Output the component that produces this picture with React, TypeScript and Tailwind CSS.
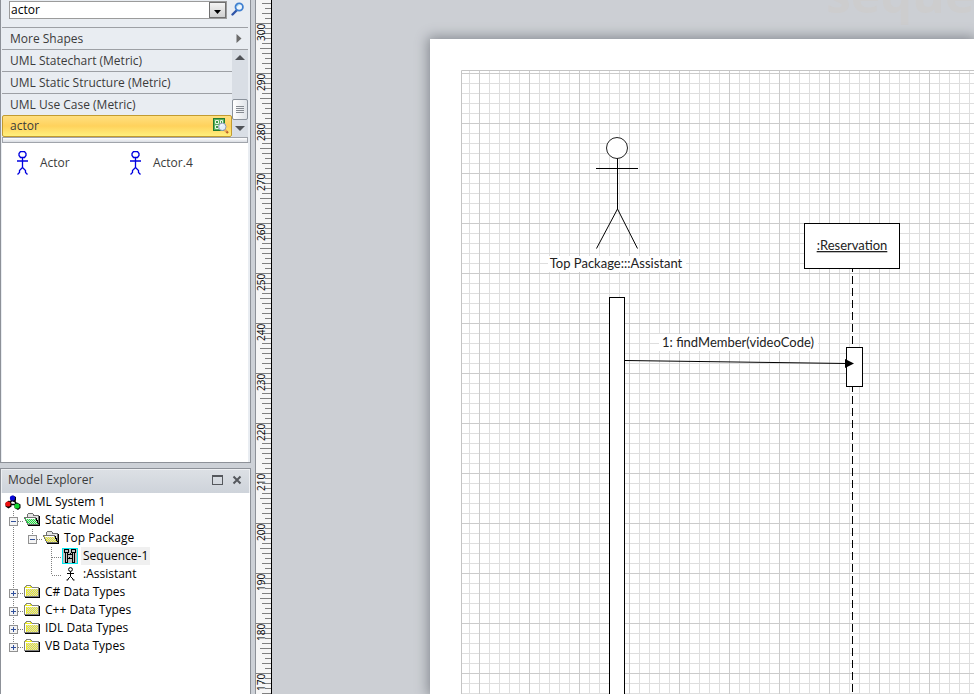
import { useState } from "react";
import type { ReactNode } from "react";
import clsx from "clsx";

const stencils = [
  "UML Statechart (Metric)",
  "UML Static Structure (Metric)",
  "UML Use Case (Metric)",
];

const rulerLabels = [300, 290, 280, 270, 260, 250, 240, 230, 220, 210, 200, 190, 180, 170];

// left end of each tick, counted from a numbered division
const tickStarts = [1, 10, 7, 10, 7, 5, 7, 10, 7, 10];

type Guide = "line" | "none" | "branch" | "last" | "open" | "closed" | "closedLast" | "openLast";

type TreeRow = {
  label: string;
  guides: Guide[];
  icon: ReactNode;
  selected?: boolean;
};

function SearchIcon() {
  return (
    <svg width="14" height="14" viewBox="0 0 14 14" aria-hidden="true">
      <path d="M1.5 12.5 5.5 8.5" stroke="#2f55a8" strokeWidth="2.4" strokeLinecap="round" />
      <circle cx="8.2" cy="5" r="3.7" fill="#eef6fd" stroke="#3f7fd0" strokeWidth="1.8" />
      <path d="M6 4.6a2.4 2.4 0 0 1 2.4-2" stroke="#8fd0f0" fill="none" />
    </svg>
  );
}

function StencilSearchIcon() {
  return (
    <svg width="16" height="16" viewBox="0 0 16 16" aria-hidden="true">
      <rect x="0.5" y="0.5" width="11" height="12" fill="#58b060" stroke="#237a30" />
      <path d="M2.500 2.500h3v3h-3zM7.500 2.500h2v3h-2zM2.500 7.500h3v3h-3z" fill="#3f9a48" stroke="#e9f7e6" />
      <path d="m11.500 11.500 3.500 3.500" stroke="#b8622a" strokeWidth="2.200" />
      <path d="m11 11 2.500 2.500" stroke="#f3b25a" strokeWidth="2" />
      <circle cx="9.300" cy="8.800" r="3.700" fill="#e4eef8" stroke="#8c9cb8" />
      <path d="M7.500 8.400a2 2 0 0 1 2-1.600" stroke="#fff" fill="none" />
    </svg>
  );
}

function ActorIcon() {
  return (
    <svg width="12" height="24" viewBox="0 0 12 24" fill="none" stroke="#0000e0" aria-hidden="true">
      <path d="M3.5.5h4l1.5 2v2l-1.5 2h-4L2 4.500v-2z" strokeWidth="1.3" />
      <path d="M0 10h11" strokeWidth="1.5" />
      <path d="M5.500 7v10M5.500 16.500 2.500 19.500v2L.5 23.500M5.500 16.500l3 3v2l2 2" strokeWidth="1.3" />
    </svg>
  );
}

function ModelIcon() {
  return (
    <svg width="16" height="15" viewBox="0 0 16 15" aria-hidden="true">
      <path d="M7 5 4 9M9 5l3 5M5 9.500h6" stroke="#000" strokeWidth="1.500" />
      <path d="M5.500 2 8 .5l3 1.500v3.500L8.500 7l-3-1.500z" fill="#000" />
      <circle cx="7.500" cy="3" r="2.600" fill="#0808d8" />
      <path d="M.5 8 4 5.500 6.500 8v3.500L3.500 13.500l-3-2z" fill="#000" />
      <circle cx="3" cy="9" r="2.600" fill="#f01010" />
      <path d="M9.500 9 12 7.500l3.500 2v3.500L13 15l-3.500-2z" fill="#000" />
      <circle cx="12" cy="11" r="2.600" fill="#10d830" />
    </svg>
  );
}

// checkered rows of single pixels over a folder face
function Dither({ x, y, width, rows }: { x: number; y: number; width: number; rows: number }) {
  return (
    <g stroke="#d4d4d4" strokeDasharray="1 1">
      {Array.from({ length: rows }, (_, i) => (
        <path key={i} d={`M${x + (i % 2)} ${y + i + 0.5}H${x + width}`} />
      ))}
    </g>
  );
}

function ClosedFolder() {
  return (
    <svg width="16" height="14" viewBox="0 0 16 14" shapeRendering="crispEdges" aria-hidden="true">
      <path d="M1 12.500h14.500V3" stroke="#000" fill="none" />
      <path d="M.5 11.500v-9l2-2h4l2 2h6v9z" fill="#ecec20" stroke="#808080" />
      <Dither x={3} y={4} width={11} rows={7} />
      <path d="M3 1.500h3M1.500 11V3.500h12" stroke="#fff" fill="none" />
    </svg>
  );
}

function OpenFolder({ color }: { color: string }) {
  return (
    <svg width="16" height="14" viewBox="0 0 16 14" shapeRendering="crispEdges" aria-hidden="true">
      <path d="M3 11.500V2.500l1.500-2h4l1.500 2h4.500v9z" fill="#e4e4e4" stroke="#707070" />
      <path d="M4 12.500h11.500V3" stroke="#000" fill="none" />
      <path d="M3.500 11.500.5 4.500h11l3 7z" fill={color} stroke="#707070" />
      <Dither x={2} y={6} width={10} rows={2} />
      <Dither x={4} y={8} width={9} rows={3} />
      <path d="M1.500 5.500h9.500" stroke="#fff" />
      <path d="M12 5l2.500 6" stroke="#000" />
    </svg>
  );
}

function SequenceIcon() {
  return (
    <svg width="16" height="16" viewBox="0 0 16 16" shapeRendering="crispEdges" aria-hidden="true">
      <path d="M0 0h16v16H0z" fill="#00e8f0" />
      <path d="M1 1h14v14H1z" fill="#c0c0c0" />
      <path
        d="M2.500 1.500h4v3h-4zM9.500 1.500h4v3h-4zM3.500 4.500h2v10h-2zM10.500 4.500h2v10h-2zM6 6.500h4M6 10.500h4"
        fill="none"
        stroke="#000"
      />
      <path d="M8.500 5v1M7.500 9v1" stroke="#000" />
    </svg>
  );
}

function PersonIcon() {
  return (
    <svg width="16" height="16" viewBox="0 0 16 16" fill="none" stroke="#000" aria-hidden="true">
      <circle cx="8.500" cy="3.500" r="1.900" />
      <path d="M5 7.500h7M8.500 5.500v5l-2.500 2.500v1H4.500M8.500 10.500l2.500 2.500v1h1.500" />
    </svg>
  );
}

const treeRows: TreeRow[] = [
  { label: "Static Model", guides: ["open"], icon: <OpenFolder color="#10ec38" /> },
  { label: "Top Package", guides: ["line", "openLast"], icon: <OpenFolder color="#ecec20" /> },
  { label: "Sequence-1", guides: ["line", "none", "branch"], icon: <SequenceIcon />, selected: true },
  { label: ":Assistant", guides: ["line", "none", "last"], icon: <PersonIcon /> },
  { label: "C# Data Types", guides: ["closed"], icon: <ClosedFolder /> },
  { label: "C++ Data Types", guides: ["closed"], icon: <ClosedFolder /> },
  { label: "IDL Data Types", guides: ["closed"], icon: <ClosedFolder /> },
  { label: "VB Data Types", guides: ["closedLast"], icon: <ClosedFolder /> },
];

function GuideCell({ kind, label }: { kind: Guide; label: string }) {
  const ends = kind === "last" || kind === "openLast" || kind === "closedLast";
  const expanded = kind === "open" || kind === "openLast";
  const hasButton = expanded || kind === "closed" || kind === "closedLast";

  const drawing = (
    <svg width="19" height="18" viewBox="0 0 19 18" shapeRendering="crispEdges" aria-hidden="true">
      {kind !== "none" && (
        <path d={ends ? "M9.500 0V10" : "M9.500 0V18"} stroke="#808080" strokeDasharray="1 1" />
      )}
      {kind !== "none" && kind !== "line" && (
        <path d="M10 10.500H19" stroke="#808080" strokeDasharray="1 1" />
      )}
      {hasButton && (
        <>
          <rect x="5.500" y="6.500" width="8" height="8" fill="#f4f4f4" stroke="#919191" />
          <path d={expanded ? "M7 10.500h5" : "M7 10.500h5M9.500 8v5"} stroke="#31509b" />
        </>
      )}
    </svg>
  );

  if (!hasButton) return <span className="w-[19px] shrink-0">{drawing}</span>;
  return (
    <button
      type="button"
      className="w-[19px] shrink-0"
      aria-expanded={expanded}
      aria-label={`Toggle ${label}`}
    >
      {drawing}
    </button>
  );
}

function ShapesPanel() {
  const [query, setQuery] = useState("actor");

  return (
    <section className="flex h-[463px] shrink-0 flex-col border-x border-b border-[#8d9198] bg-[#e9edf2] pr-[2px] pl-px">
      <div className="flex h-[27px] shrink-0 items-start pt-px pl-[7px]">
        <div className="flex h-[18px] w-[218px] border border-[#9b9b9b] bg-white">
          <input
            type="text"
            aria-label="Search for shapes"
            value={query}
            onChange={(e) => setQuery(e.target.value)}
            className="min-w-0 flex-1 pl-px text-[12px] leading-4 text-black outline-none"
          />
          <button
            type="button"
            aria-label="Previous searches"
            className="flex w-[17px] items-end justify-center border border-[#707070] bg-linear-to-b from-[#f4f4f4] to-[#d0d0d0] pb-[3px]"
          >
            <svg width="7" height="4" viewBox="0 0 7 4" aria-hidden="true">
              <path d="M0 0h7L3.500 4z" fill="#000" />
            </svg>
          </button>
        </div>
        <button type="button" aria-label="Search" className="ml-[4px] pt-px">
          <SearchIcon />
        </button>
      </div>

      <button
        type="button"
        className="flex h-[22px] shrink-0 items-center justify-between border-t border-[#9da0a5] pr-[6px] pl-2 text-left"
      >
        More Shapes
        <svg width="6" height="9" viewBox="0 0 6 9" aria-hidden="true">
          <path d="M.5 0v9L5.500 4.500z" fill="#6b6b6b" />
        </svg>
      </button>

      <div className="flex h-[88px] shrink-0 border-t border-[#9da0a5]">
        <div className="flex min-w-0 flex-1 flex-col">
          {stencils.map((name, i) => (
            <button
              key={name}
              type="button"
              className={clsx(
                "flex items-center pl-2 text-left",
                i === 0 ? "h-[21px]" : "h-[22px] border-t border-[#9da0a5]"
              )}
            >
              {name}
            </button>
          ))}
          <button
            type="button"
            className="flex h-[22px] items-center justify-between rounded-xs border border-[#c29b30] bg-linear-to-b from-[#ffdf7e] via-[#ffd25c] to-[#fff07c] pr-[2px] pl-[7px] text-left"
          >
            actor
            <StencilSearchIcon />
          </button>
        </div>
        <div className="flex w-4 shrink-0 flex-col items-center justify-between bg-[#d9dee5] pt-[5px] pb-[6px]">
          <svg width="10" height="5" viewBox="0 0 10 5" aria-hidden="true">
            <path d="M0 5h10L5 0z" fill="#505358" />
          </svg>
          <div className="mt-auto mb-[6px] flex h-[21px] w-4 items-center justify-center rounded-xs border border-[#8b929b] bg-linear-to-r from-white to-[#dfe3e8]">
            <svg width="8" height="8" viewBox="0 0 8 8" shapeRendering="crispEdges" aria-hidden="true">
              <path d="M0 .5h8M0 2.500h8M0 4.500h8M0 6.500h8" stroke="#858a91" />
            </svg>
          </div>
          <svg width="10" height="5" viewBox="0 0 10 5" aria-hidden="true">
            <path d="M0 0h10L5 5z" fill="#505358" />
          </svg>
        </div>
      </div>

      <div className="h-[6px] shrink-0 border border-[#a0a4ab] bg-linear-to-b from-white to-[#d9dde3]" />

      <ul className="flex flex-1 items-start bg-white pt-[7px] pl-[15px]">
        {["Actor", "Actor.4"].map((name) => (
          <li key={name} className="flex h-[26px] w-[113px] items-center gap-[11px]">
            <ActorIcon />
            {name}
          </li>
        ))}
      </ul>
    </section>
  );
}

function ModelExplorer() {
  return (
    <section className="flex min-h-0 flex-1 flex-col border-x border-t border-[#8d9198] bg-white">
      <header className="flex h-[24px] shrink-0 items-center border-x border-t border-[#eef0f3] bg-linear-to-b from-[#dce0e5] to-[#ced3da] pr-[7px] pb-[3px] pl-[6px]">
        <h2 className="flex-1">Model Explorer</h2>
        <button type="button" aria-label="Maximize" className="mr-[9px]">
          <svg width="11" height="10" viewBox="0 0 11 10" shapeRendering="crispEdges" aria-hidden="true">
            <path d="M.5.5h10v9H.5zM0 1.500h11" fill="none" stroke="#55585d" />
          </svg>
        </button>
        <button type="button" aria-label="Close">
          <svg width="10" height="10" viewBox="0 0 10 10" aria-hidden="true">
            <path d="m1.500 1.500 7 7m0-7-7 7" stroke="#55585d" strokeWidth="2" />
          </svg>
        </button>
      </header>

      <div className="pl-[3px] text-black">
        <div className="flex h-[18px] items-center gap-[5px] pl-px">
          <ModelIcon />
          UML System 1
        </div>
        <ul>
          {treeRows.map((row) => (
            <li key={row.label} className="flex h-[18px] items-center">
              {row.guides.map((kind, i) => (
                <GuideCell key={i} kind={kind} label={row.label} />
              ))}
              <span className="ml-px flex w-4 shrink-0 justify-center">{row.icon}</span>
              <span className={clsx("ml-[3px] h-[18px] px-[2px] leading-[18px]", row.selected && "bg-[#f0f0f0]")}>
                {row.label}
              </span>
            </li>
          ))}
        </ul>
      </div>
    </section>
  );
}

function Ruler() {
  return (
    <div className="w-[17px] shrink-0 overflow-hidden border-r border-black bg-[#f6f6f6]">
      <svg width="16" height="100%" shapeRendering="crispEdges" role="img" aria-label="Vertical ruler">
        <path d="M.5 0v2000" stroke="#8d9198" />
        {[-1, ...rulerLabels.keys()].map((n) =>
          tickStarts.map((start, i) => {
            const y = 23.5 + n * 50 + i * 5;
            return <path key={`${n}-${i}`} d={`M${start} ${y}H16`} stroke="#808080" />;
          })
        )}
        {rulerLabels.map((label, i) => (
          <text
            key={label}
            transform={`translate(10 ${41 + i * 50}) rotate(-90)`}
            className="fill-black text-[10px]"
          >
            {label}
          </text>
        ))}
      </svg>
    </div>
  );
}

function SequenceDiagram() {
  return (
    <svg
      width="100%"
      height="100%"
      className="block text-[13px] [font-family:Lato,sans-serif]"
      role="img"
      aria-label="Sequence diagram"
    >
      <defs>
        <pattern id="grid-minor" x="9" y="4" width="10" height="10" patternUnits="userSpaceOnUse">
          <path d="M.5 0V10M0 .5H10" stroke="#dedede" />
        </pattern>
        <pattern id="grid-major" x="49" y="34" width="50" height="50" patternUnits="userSpaceOnUse">
          <path d="M.5 0V50M0 .5H50" stroke="#cbcbcb" />
        </pattern>
      </defs>
      <rect x="31" y="31" width="2000" height="2000" fill="url(#grid-minor)" />
      <rect x="31" y="31" width="2000" height="2000" fill="url(#grid-major)" />
      <path d="M31.500 2000V31.500H2000" fill="none" stroke="#c4c4c4" />

      {/* assistant */}
      <g fill="none" stroke="#000">
        <circle cx="187" cy="109" r="10.500" fill="#fff" stroke="#222" />
        <path d="M187.500 119.500v50.500M166 129.500h42" />
        <path d="m166.500 209.500 21-39.500 20 39.500" />
      </g>
      <rect x="118" y="217" width="138" height="16" fill="#fff" />
      <text x="186" y="229" textAnchor="middle" fill="#222">
        Top Package:::Assistant
      </text>
      <rect x="179.500" y="258.500" width="15" height="2000" fill="#fff" stroke="#000" />

      {/* reservation lifeline */}
      <path d="M422.500 225V2000" stroke="#000" strokeDasharray="8 4" />
      <rect x="374.500" y="184.500" width="95" height="45" fill="#fff" stroke="#000" />
      <text x="422" y="211" textAnchor="middle" fill="#222" textDecoration="underline">
        :Reservation
      </text>
      <rect x="416.500" y="308.500" width="16" height="39" fill="#fff" stroke="#000" />

      {/* message */}
      <rect x="229" y="295" width="159" height="17" fill="#fff" />
      <text x="308" y="308" textAnchor="middle" fill="#222">
        1: findMember(videoCode)
      </text>
      <path d="M195 321.500 417 324.500" stroke="#000" />
      <path d="M415 320v9l9-4.500z" fill="#000" />
    </svg>
  );
}

function DrawingArea() {
  return (
    <main className="relative flex min-w-0 flex-1 overflow-hidden bg-[#cccfd4] pt-[39px] pl-[158px]">
      <span className="absolute -top-10 left-[554px] text-[50px] leading-[68px] font-bold text-[#cdcdce]">
        sequence
      </span>
      <div className="relative min-w-0 flex-1 bg-white shadow-[0_0_12px_2px_#858990]">
        <SequenceDiagram />
      </div>
    </main>
  );
}

export default function App() {
  return (
    <div className="flex h-screen overflow-hidden bg-[#cdd1d7] text-[12px] leading-4 text-[#3b3b3b] [font-family:'Open_Sans','Noto_Sans',sans-serif]">
      <aside className="mr-1 flex w-[251px] shrink-0 flex-col gap-[5px]">
        <ShapesPanel />
        <ModelExplorer />
      </aside>
      <Ruler />
      <DrawingArea />
    </div>
  );
}
